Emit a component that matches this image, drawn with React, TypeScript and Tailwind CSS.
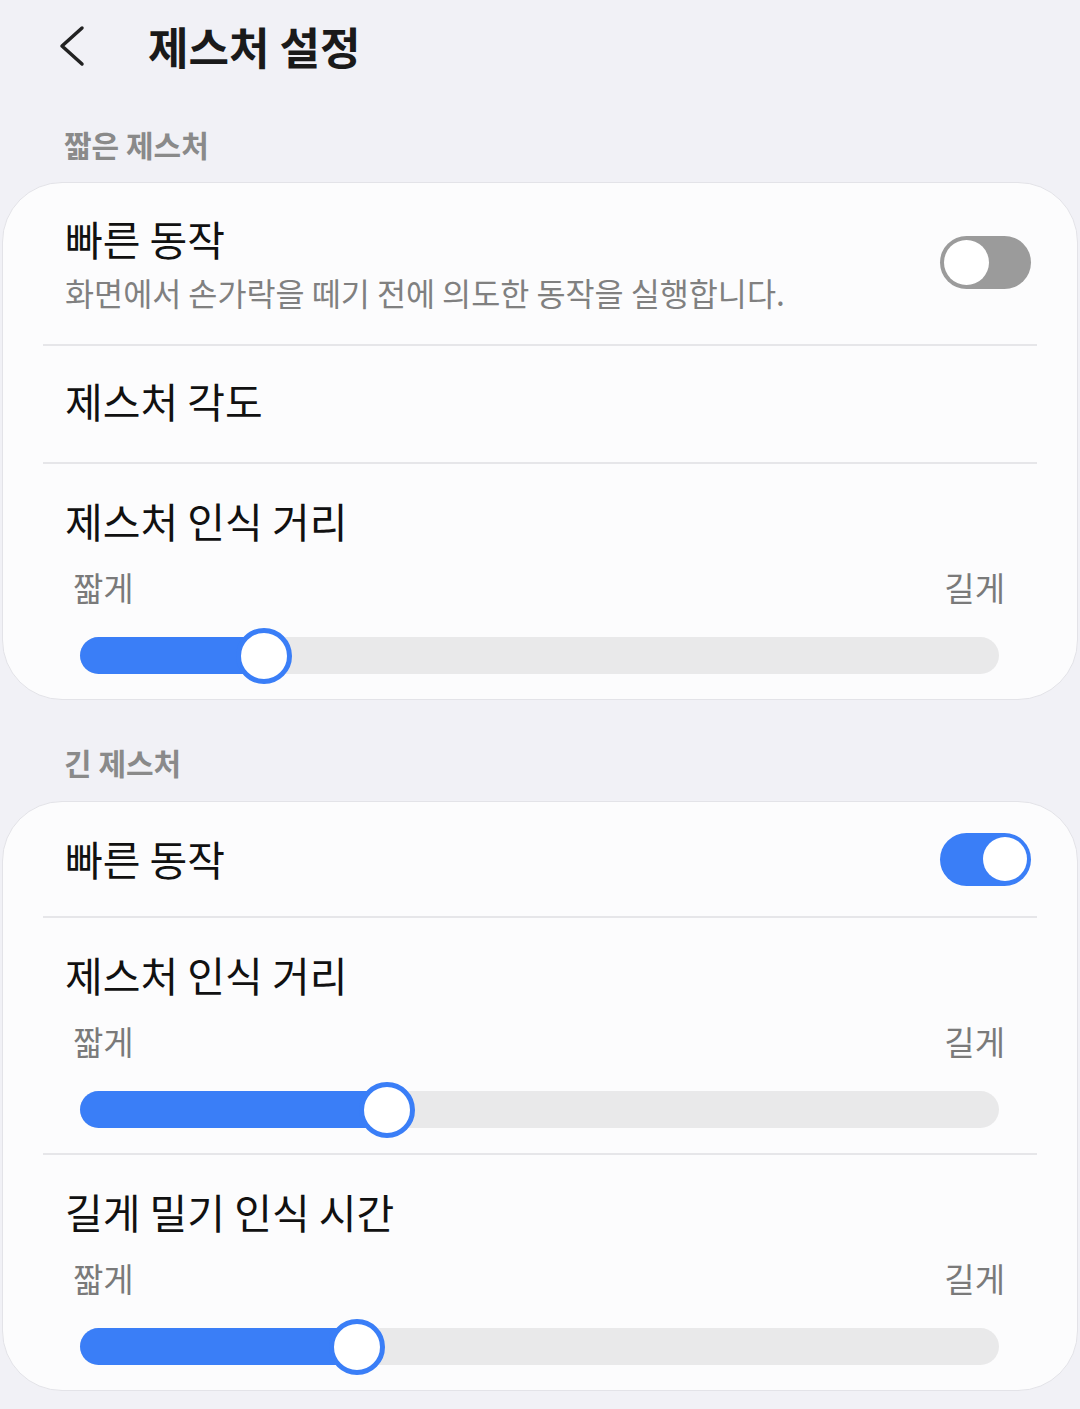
import React from "react";

const font = { fontFamily: '"Noto Sans CJK KR", "Noto Sans", sans-serif' };

function Toggle({ on }: { on: boolean }) {
  return on ? (
    <div className="w-[91px] h-[53px] rounded-full bg-[#3a7ef7] flex items-center justify-end pr-[4px]">
      <div className="w-[44px] h-[44px] rounded-full bg-white" />
    </div>
  ) : (
    <div className="w-[91px] h-[53px] rounded-full bg-[#9b9b9b] flex items-center pl-[4px]">
      <div className="w-[45px] h-[45px] rounded-full bg-white" />
    </div>
  );
}

function Divider() {
  return <div className="mx-[40px] h-[2px] bg-[#e6e6e9]" />;
}

function SliderRow({ title, value }: { title: string; value: number }) {
  // value: thumb centre, px from track start
  return (
    <div className="h-[235px] flex flex-col">
      <div className="pl-[62px] pt-[26px] text-[41px] leading-[60px] text-[#111]">{title}</div>
      <div className="flex justify-between pl-[70px] pr-[72px] pt-[15px] text-[33px] leading-[44px] text-[#7a7a7a]">
        <span>짧게</span>
        <span>길게</span>
      </div>
      <div className="ml-[77px] mr-[78px] mt-[28px] relative h-[37px] rounded-full bg-[#e9e9ea]">
        <div className="h-full rounded-full bg-[#3a7ef7]" style={{ width: value }} />
        <div
          className="absolute top-1/2 w-[56px] h-[56px] -mt-[28px] -ml-[28px] rounded-full bg-white border-[5px] border-[#3a7ef7]"
          style={{ left: value }}
        />
      </div>
    </div>
  );
}

export default function App() {
  return (
    <div className="w-[1080px] h-[1409px] bg-[#f1f1f6] overflow-hidden" style={font}>
      {/* Header */}
      <div className="h-[108px] flex items-center">
        <div className="w-[148px] pl-[56px] flex items-center -mt-[16px]">
          <svg width="34" height="42" viewBox="0 0 34 42" fill="none">
            <path d="M26 3 L6 21 L26 39" stroke="#222" strokeWidth="3.5" strokeLinecap="round" strokeLinejoin="round" />
          </svg>
        </div>
        <div className="text-[44px] font-bold text-[#1a1a1a] leading-none -mt-[16px]">제스처 설정</div>
      </div>

      {/* 짧은 제스처 */}
      <div className="pl-[64px] h-[74px] pt-[16px] text-[30px] font-bold text-[#8a8a8a] leading-[40px]">짧은 제스처</div>
      <div className="mx-[2px] rounded-[60px] bg-[#fcfcfd] border border-[#e3e3e8]">
        <div className="h-[161px] flex items-center justify-between pl-[62px] pr-[46px]">
          <div className="flex flex-col -mt-[4px]">
            <span className="text-[41px] leading-[56px] text-[#111]">빠른 동작</span>
            <span className="text-[31.6px] leading-[44px] mt-[4px] text-[#808080]">화면에서 손가락을 떼기 전에 의도한 동작을 실행합니다.</span>
          </div>
          <div className="-mt-[2px]">
            <Toggle on={false} />
          </div>
        </div>
        <Divider />
        <div className="h-[116px] flex items-center pl-[62px] pb-[6px] text-[41px] text-[#111]">제스처 각도</div>
        <Divider />
        <SliderRow title="제스처 인식 거리" value={184} />
      </div>

      {/* 긴 제스처 */}
      <div className="pl-[64px] h-[101px] pt-[42px] text-[30px] font-bold text-[#8a8a8a] leading-[40px]">긴 제스처</div>
      <div className="mx-[2px] rounded-[60px] bg-[#fcfcfd] border border-[#e3e3e8]">
        <div className="h-[114px] flex items-center justify-between pl-[62px] pr-[46px]">
          <span className="text-[41px] text-[#111]">빠른 동작</span>
          <Toggle on={true} />
        </div>
        <Divider />
        <SliderRow title="제스처 인식 거리" value={307} />
        <Divider />
        <SliderRow title="길게 밀기 인식 시간" value={277} />
      </div>
    </div>
  );
}
